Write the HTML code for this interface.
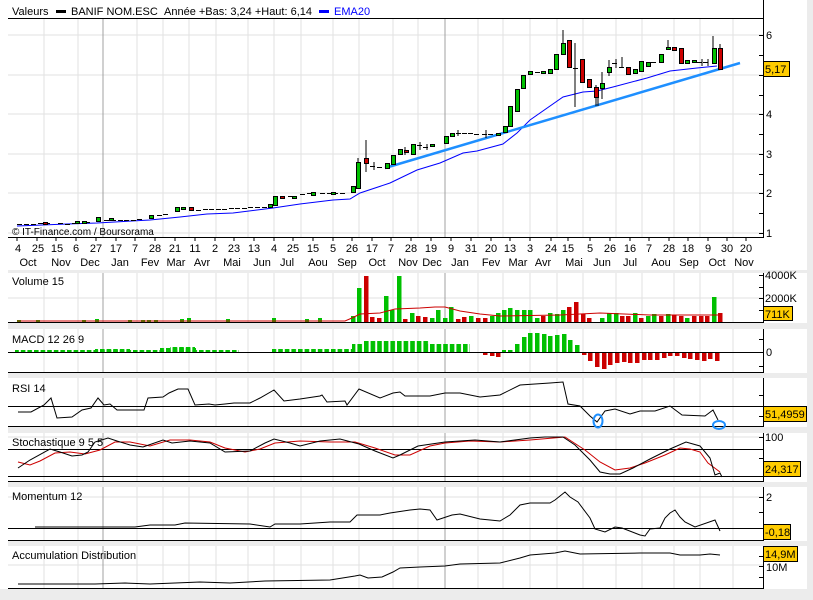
<!DOCTYPE html>
<html><head><meta charset="utf-8"><style>
html,body{margin:0;padding:0;background:#fff;}
svg{display:block;font-family:"Liberation Sans",sans-serif;}
</style></head><body>
<svg width="813" height="600" viewBox="0 0 813 600" xmlns="http://www.w3.org/2000/svg">
<defs>
<pattern id="gb" patternUnits="userSpaceOnUse" x="1" y="0" width="6.6" height="10"><rect x="0" y="0" width="4.6" height="10" fill="#00c000"/></pattern>
</defs>
<rect x="0" y="0" width="813" height="600" fill="#fff"/>
<rect x="807" y="0" width="6" height="600" fill="#ececec"/>
<g fill="#ececec">
<rect x="8" y="270" width="799" height="3"/>
<rect x="8" y="323" width="799" height="6"/>
<rect x="8" y="373" width="799" height="5"/>
<rect x="8" y="427" width="799" height="6"/>
<rect x="8" y="482" width="799" height="5"/>
<rect x="8" y="541" width="799" height="5"/>
<rect x="0" y="589" width="813" height="11"/>
</g>
<g stroke="#e2e2e2" stroke-width="1">
<path d="M44 18V237M78 18V237M137 18V237M163 18V237M189 18V237M216 18V237M248 18V237M274 18V237M301 18V237M333 18V237M359 18V237M393 18V237M418 18V237M478 18V237M503 18V237M530 18V237M557 18V237M583 18V237M616 18V237M642 18V237M674 18V237M700 18V237M733 18V237"/>
<path d="M44 273V322M78 273V322M137 273V322M163 273V322M189 273V322M216 273V322M248 273V322M274 273V322M301 273V322M333 273V322M359 273V322M393 273V322M418 273V322M478 273V322M503 273V322M530 273V322M557 273V322M583 273V322M616 273V322M642 273V322M674 273V322M700 273V322M733 273V322"/>
<path d="M44 329V372M78 329V372M137 329V372M163 329V372M189 329V372M216 329V372M248 329V372M274 329V372M301 329V372M333 329V372M359 329V372M393 329V372M418 329V372M478 329V372M503 329V372M530 329V372M557 329V372M583 329V372M616 329V372M642 329V372M674 329V372M700 329V372M733 329V372"/>
<path d="M44 378V426M78 378V426M137 378V426M163 378V426M189 378V426M216 378V426M248 378V426M274 378V426M301 378V426M333 378V426M359 378V426M393 378V426M418 378V426M478 378V426M503 378V426M530 378V426M557 378V426M583 378V426M616 378V426M642 378V426M674 378V426M700 378V426M733 378V426"/>
<path d="M44 433V481M78 433V481M137 433V481M163 433V481M189 433V481M216 433V481M248 433V481M274 433V481M301 433V481M333 433V481M359 433V481M393 433V481M418 433V481M478 433V481M503 433V481M530 433V481M557 433V481M583 433V481M616 433V481M642 433V481M674 433V481M700 433V481M733 433V481"/>
<path d="M44 487V540M78 487V540M137 487V540M163 487V540M189 487V540M216 487V540M248 487V540M274 487V540M301 487V540M333 487V540M359 487V540M393 487V540M418 487V540M478 487V540M503 487V540M530 487V540M557 487V540M583 487V540M616 487V540M642 487V540M674 487V540M700 487V540M733 487V540"/>
<path d="M44 546V588M78 546V588M137 546V588M163 546V588M189 546V588M216 546V588M248 546V588M274 546V588M301 546V588M333 546V588M359 546V588M393 546V588M418 546V588M478 546V588M503 546V588M530 546V588M557 546V588M583 546V588M616 546V588M642 546V588M674 546V588M700 546V588M733 546V588"/>
<path d="M8 35H763M8 75H763M8 114H763M8 154H763M8 193H763M8 233H763"/>
<path d="M8 298H763M8 565H763M8 437H763M8 497H763"/>
</g>
<g stroke="#a0a0a0"><path d="M103 18V237M445 18V237M103 273V322M445 273V322M103 329V372M445 329V372M103 378V426M445 378V426M103 433V481M445 433V481M103 487V540M445 487V540M103 546V588M445 546V588"/></g>

<text x="12" y="15" font-size="11">Valeurs</text>
<rect x="56" y="10" width="10" height="3" fill="#000"/>
<text x="71" y="15" font-size="11">BANIF NOM.ESC</text>
<text x="164" y="15" font-size="11">Année +Bas: 3,24 +Haut: 6,14</text>
<rect x="319" y="10" width="10" height="3" fill="#0000ff"/>
<text x="334" y="15" font-size="11" fill="#0000ff">EMA20</text>
<path d="M8 18.5H763" stroke="#000"/>

<g stroke="#000" fill="none">
<path d="M763.5 0V238M8 237.5H763"/>
<path d="M8 322.5H763M763.5 273V323"/>
<path d="M8 352.5H763M8 372.5H763M763.5 329V373"/>
<path d="M8 406.5H763M8 426.5H763M763.5 378V427"/>
<path d="M8 449.5H763M8 476.5H763M8 481.5H763M763.5 433V482"/>
<path d="M8 528.5H763M8 540.5H763M763.5 487V541"/>
<path d="M8 588.5H763M763.5 546V589"/>
<path d="M759 35.5h4M759 55.5h4M759 75.5h4M759 95.5h4M759 114.5h4M759 134.5h4M759 154.5h4M759 174.5h4M759 193.5h4M759 213.5h4M759 233.5h4"/>
<path d="M759 275.5h4M759 287.5h4M759 298.5h4M759 310.5h4M759 339.5h4M759 352.5h4M759 366.5h4M759 395.5h4M759 416.5h4M759 437.5h4M759 458.5h4M759 497.5h4M759 512.5h4M759 556.5h4M759 566.5h4M759 577.5h4"/>
</g>
<g stroke="#000"><path d="M17 238v3M37 238v3M56 238v3M76 238v3M96 238v3M116 238v3M135 238v3M155 238v3M175 238v3M195 238v3M215 238v3M234 238v3M254 238v3M274 238v3M293 238v3M313 238v3M333 238v3M352 238v3M372 238v3M391 238v3M411 238v3M431 238v3M451 238v3M471 238v3M491 238v3M510 238v3M530 238v3M551 238v3M568 238v3M590 238v3M610 238v3M630 238v3M649 238v3M669 238v3M688 238v3M708 238v3M727 238v3M746 238v3"/></g>

<g font-size="11">
<text x="766" y="39">6</text><text x="766" y="118">4</text><text x="766" y="158">3</text><text x="766" y="197">2</text><text x="766" y="237">1</text>
<text x="765" y="279">4000K</text><text x="765" y="302">2000K</text>
<text x="766" y="356">0</text>
<text x="765" y="441">100</text>
<text x="766" y="501">2</text>
<text x="766" y="571">10M</text>
</g>
<g font-size="11" stroke="#000" stroke-width="1">
<rect x="763.5" y="61.5" width="26" height="15" fill="#ffcc00"/>
<rect x="763.5" y="306.5" width="29" height="14" fill="#ffcc00"/>
<rect x="763.5" y="406.5" width="43" height="15" fill="#ffcc00"/>
<rect x="763.5" y="461.5" width="37" height="15" fill="#ffcc00"/>
<rect x="763.5" y="524.5" width="27" height="15" fill="#ffcc00"/>
<rect x="763.5" y="546.5" width="34" height="15" fill="#ffcc00"/>
</g>
<g font-size="11">
<text x="765" y="73">5,17</text>
<text x="765" y="318">711K</text>
<text x="765" y="418">51,4959</text>
<text x="765" y="473">24,317</text>
<text x="765" y="536">-0,18</text>
<text x="765" y="558">14,9M</text>
</g>

<g font-size="11" text-anchor="middle">
<text x="18" y="252">4</text><text x="38" y="252">25</text><text x="57" y="252">15</text><text x="76" y="252">6</text><text x="96" y="252">27</text><text x="116" y="252">17</text><text x="135" y="252">7</text><text x="155" y="252">28</text><text x="175" y="252">21</text><text x="195" y="252">11</text><text x="215" y="252">2</text><text x="234" y="252">23</text><text x="254" y="252">13</text><text x="274" y="252">4</text><text x="293" y="252">25</text><text x="313" y="252">15</text><text x="333" y="252">5</text><text x="352" y="252">26</text><text x="372" y="252">17</text><text x="391" y="252">7</text><text x="411" y="252">28</text><text x="431" y="252">19</text><text x="451" y="252">9</text><text x="471" y="252">31</text><text x="491" y="252">20</text><text x="510" y="252">13</text><text x="530" y="252">3</text><text x="551" y="252">24</text><text x="568" y="252">15</text><text x="590" y="252">5</text><text x="610" y="252">26</text><text x="630" y="252">16</text><text x="649" y="252">7</text><text x="669" y="252">28</text><text x="688" y="252">18</text><text x="708" y="252">9</text><text x="727" y="252">30</text><text x="746" y="252">20</text>
<text x="28" y="266">Oct</text><text x="61" y="266">Nov</text><text x="90" y="266">Dec</text><text x="120" y="266">Jan</text><text x="150" y="266">Fev</text><text x="176" y="266">Mar</text><text x="202" y="266">Avr</text><text x="232" y="266">Mai</text><text x="262" y="266">Jun</text><text x="287" y="266">Jul</text><text x="318" y="266">Aou</text><text x="347" y="266">Sep</text><text x="377" y="266">Oct</text><text x="408" y="266">Nov</text><text x="432" y="266">Dec</text><text x="460" y="266">Jan</text><text x="491" y="266">Fev</text><text x="518" y="266">Mar</text><text x="543" y="266">Avr</text><text x="574" y="266">Mai</text><text x="602" y="266">Jun</text><text x="630" y="266">Jul</text><text x="661" y="266">Aou</text><text x="689" y="266">Sep</text><text x="717" y="266">Oct</text><text x="744" y="266">Nov</text>
</g>

<polyline fill="none" stroke="#0000ff" stroke-width="1" points="17,226 67,224 97,223 150,220 180,217 207,214 233,213 273,208 300,204 333,200 350,199 360,193 390,183 417,170 440,163 463,153 477,151 503,144 517,133 530,120 563,97 583,92 597,91 613,87 647,78 670,71 697,68 717,66"/>
<path d="M385 168L740 63" stroke="#1e8fff" stroke-width="2.5"/>

<g stroke="#000" stroke-width="1">
<path d="M17 224.5h5M24 224.5h5M31 224.5h5M38 223.5h5M45 223.5h5M58 223.5h5M65 224.5h5M72 223.5h5M85 222.5h5M104 220.5h5M111 220.5h5M118 220.5h5M124 220.5h5M131 220.5h5M137 219.5h5M157 215.5h5M163 214.5h5M196 210.5h5M203 209.5h5M209 209.5h5M216 209.5h5M222 209.5h5M229 208.5h5M235 208.5h5M242 208.5h5M248 207.5h5M255 207.5h5M262 207.5h5M288 196.5h5M300 194.5h5M307 193.5h5M320 193.5h5M327 193.5h5M333 193.5h5M340 193.5h5M370 166.5h5M377 167.5h5M417 145.5h5M423 147.5h5M456 133.5h5M462 133.5h5M468 133.5h5M474 134.5h5M482 134.5h5M488 134.5h5M535 72.5h5M573 68.5h5M612 63.5h5M619 67.5h5M651 62.5h5M697 62.5h5M703 62.5h5"/>
<path d="M366 140V172M575 43V107M596 85V106M602 72V99M609 60V76M622 57V67M668 40V49M713 36V48M720 44V50M405 147V155M374 162V170M420 142V150M427 144V150M458 130V136M486 130V138M616 59V68M702 59V66M708 59V66"/>
</g>
<g fill="#00c000" stroke="#000" stroke-width="1">
<rect x="75.5" y="221.5" width="4" height="2"/><rect x="82.5" y="221.5" width="4" height="2"/><rect x="96.5" y="217.5" width="4" height="4"/><rect x="109.5" y="218.5" width="4" height="2"/><rect x="149.5" y="215.5" width="4" height="3"/><rect x="175.5" y="207.5" width="4" height="4"/><rect x="181.5" y="207.5" width="4" height="2"/><rect x="268.5" y="204.5" width="4" height="3"/><rect x="273.5" y="196.5" width="4" height="9"/><rect x="292.5" y="196.5" width="4" height="2"/><rect x="311.5" y="192.5" width="4" height="3"/><rect x="331.5" y="192.5" width="4" height="2"/>
<rect x="351.5" y="186.5" width="4" height="6"/><rect x="356.5" y="162.5" width="4" height="26"/><rect x="385.5" y="163.5" width="4" height="5"/><rect x="391.5" y="155.5" width="4" height="9"/><rect x="398.5" y="149.5" width="4" height="5"/><rect x="411.5" y="144.5" width="4" height="10"/><rect x="430.5" y="144.5" width="4" height="2"/><rect x="444.5" y="136.5" width="4" height="7"/><rect x="450.5" y="133.5" width="4" height="3"/><rect x="496.5" y="133.5" width="4" height="2"/><rect x="503.5" y="126.5" width="4" height="6"/>
<rect x="508.5" y="106.5" width="4" height="20"/><rect x="515.5" y="89.5" width="4" height="22"/><rect x="521.5" y="75.5" width="4" height="13"/><rect x="528.5" y="71.5" width="4" height="3"/><rect x="541.5" y="71.5" width="4" height="2"/><rect x="548.5" y="69.5" width="4" height="4"/><rect x="554.5" y="54.5" width="4" height="15"/><rect x="561.5" y="43.5" width="4" height="11"/><rect x="600.5" y="83.5" width="4" height="5"/><rect x="607.5" y="67.5" width="4" height="5"/><rect x="633.5" y="69.5" width="4" height="4"/><rect x="639.5" y="61.5" width="4" height="10"/><rect x="646.5" y="62.5" width="4" height="4"/><rect x="659.5" y="54.5" width="4" height="8"/><rect x="666.5" y="47.5" width="4" height="2"/><rect x="685.5" y="60.5" width="4" height="3"/><rect x="692.5" y="60.5" width="4" height="2"/><rect x="712.5" y="48.5" width="4" height="15"/>
</g>
<g stroke="#000"><path d="M563 30V44M358 158V163M598 95V106"/></g>
<g fill="#cc0000" stroke="#000" stroke-width="1">
<rect x="43.5" y="222.5" width="4" height="2"/><rect x="189.5" y="207.5" width="4" height="3"/><rect x="280.5" y="196.5" width="4" height="2"/><rect x="364.5" y="158.5" width="4" height="5"/><rect x="404.5" y="150.5" width="4" height="2"/><rect x="567.5" y="40.5" width="4" height="27"/><rect x="580.5" y="59.5" width="4" height="23"/><rect x="587.5" y="79.5" width="4" height="8"/><rect x="594.5" y="87.5" width="4" height="10"/><rect x="626.5" y="67.5" width="4" height="7"/><rect x="672.5" y="47.5" width="4" height="3"/><rect x="679.5" y="48.5" width="4" height="15"/><rect x="718.5" y="48.5" width="4" height="21"/>
</g>
<text x="12" y="235" font-size="10">© IT-Finance.com / Boursorama</text>

<text x="12" y="285" font-size="11">Volume 15</text>
<g fill="#00c000">
<rect x="17" y="320" width="4" height="2"/><rect x="36" y="320" width="4" height="2"/><rect x="82" y="320" width="4" height="2"/><rect x="95" y="319" width="4" height="3"/><rect x="128" y="320" width="4" height="2"/><rect x="141" y="320" width="4" height="2"/><rect x="147" y="320" width="4" height="2"/><rect x="154" y="320" width="4" height="2"/><rect x="180" y="319" width="4" height="3"/><rect x="187" y="318" width="4" height="4"/><rect x="226" y="319" width="4" height="3"/><rect x="272" y="318" width="4" height="4"/><rect x="305" y="319" width="4" height="3"/><rect x="318" y="318" width="4" height="4"/>
<rect x="351" y="316" width="4.5" height="6"/><rect x="357" y="288" width="4.5" height="34"/><rect x="384" y="296" width="4.5" height="26"/><rect x="390" y="310" width="4.5" height="12"/><rect x="397" y="276" width="4.5" height="46"/><rect x="410" y="313" width="4.5" height="9"/><rect x="430" y="318" width="4.5" height="4"/><rect x="436" y="310" width="4.5" height="12"/><rect x="443" y="318" width="4.5" height="4"/><rect x="449" y="307" width="4.5" height="15"/><rect x="469" y="316" width="4.5" height="6"/><rect x="490" y="316" width="4.5" height="6"/><rect x="496" y="313" width="4.5" height="9"/>
<rect x="502" y="310" width="4.5" height="12"/><rect x="508" y="308" width="4.5" height="14"/><rect x="515" y="310" width="4.5" height="12"/><rect x="522" y="310" width="4.5" height="12"/><rect x="528" y="310" width="4.5" height="12"/><rect x="535" y="318" width="4.5" height="4"/><rect x="548" y="313" width="4.5" height="9"/><rect x="555" y="314" width="4.5" height="8"/><rect x="561" y="310" width="4.5" height="12"/><rect x="600" y="318" width="4.5" height="4"/><rect x="607" y="313" width="4.5" height="9"/><rect x="614" y="313" width="4.5" height="9"/><rect x="633" y="313" width="4.5" height="9"/><rect x="646" y="316" width="4.5" height="6"/><rect x="652" y="314" width="4.5" height="8"/><rect x="666" y="314" width="4.5" height="8"/><rect x="685" y="318" width="4.5" height="4"/><rect x="712" y="297" width="4.5" height="25"/>
</g>
<g fill="#cc0000">
<rect x="364" y="276" width="4.5" height="46"/><rect x="370" y="317" width="4.5" height="5"/><rect x="377" y="318" width="4.5" height="4"/><rect x="403" y="319" width="4.5" height="3"/><rect x="416" y="316" width="4.5" height="6"/><rect x="423" y="317" width="4.5" height="5"/><rect x="456" y="319" width="4.5" height="3"/><rect x="462" y="317" width="4.5" height="5"/><rect x="476" y="318" width="4.5" height="4"/><rect x="483" y="318" width="4.5" height="4"/><rect x="541" y="316" width="4.5" height="6"/>
<rect x="567" y="307" width="4.5" height="15"/><rect x="574" y="302" width="4.5" height="20"/><rect x="581" y="314" width="4.5" height="8"/><rect x="587" y="318" width="4.5" height="4"/><rect x="620" y="316" width="4.5" height="6"/><rect x="626" y="316" width="4.5" height="6"/><rect x="639" y="318" width="4.5" height="4"/><rect x="659" y="316" width="4.5" height="6"/><rect x="672" y="315" width="4.5" height="7"/><rect x="679" y="316" width="4.5" height="6"/><rect x="692" y="316" width="4.5" height="6"/><rect x="699" y="316" width="4.5" height="6"/><rect x="705" y="316" width="4.5" height="6"/><rect x="718" y="313" width="4.5" height="9"/>
</g>
<polyline fill="none" stroke="#cc0000" points="17,321 200,321 345,321 352,318 360,314 380,313 395,309 420,308 435,307 445,307 460,311 480,314 500,316 560,315 600,313 650,315 720,315"/>

<text x="12" y="343" font-size="11">MACD 12 26 9</text>
<g fill="url(#gb)">
<rect x="15" y="350" width="224" height="2"/><rect x="95" y="349" width="35" height="3"/><rect x="160" y="348" width="36" height="4"/><rect x="170" y="347" width="25" height="5"/>
<rect x="272" y="349" width="80" height="3"/><rect x="352" y="344" width="12" height="8"/><rect x="364" y="341" width="66" height="11"/><rect x="424" y="344" width="46" height="8"/>
</g>
<g fill="#00c000">
<rect x="502" y="350" width="4" height="2"/><rect x="508" y="350" width="4.5" height="2"/><rect x="515" y="344" width="4.5" height="8"/><rect x="522" y="337" width="4.5" height="15"/><rect x="528" y="333" width="4.5" height="19"/><rect x="535" y="333" width="4.5" height="19"/><rect x="542" y="334" width="4.5" height="18"/><rect x="548" y="336" width="4.5" height="16"/><rect x="555" y="335" width="4.5" height="17"/><rect x="562" y="334" width="4.5" height="18"/><rect x="568" y="340" width="4.5" height="12"/><rect x="575" y="345" width="4.5" height="7"/>
</g>
<g fill="#cc0000">
<rect x="483" y="353" width="4.5" height="2"/><rect x="490" y="353" width="4.5" height="3"/><rect x="496" y="353" width="4.5" height="4"/>
<rect x="582" y="353" width="4.5" height="2"/><rect x="588" y="353" width="4.5" height="8"/><rect x="595" y="353" width="4.5" height="14"/><rect x="602" y="353" width="4.5" height="16"/><rect x="608" y="353" width="4.5" height="12"/><rect x="615" y="353" width="4.5" height="10"/><rect x="622" y="353" width="4.5" height="9"/><rect x="628" y="353" width="4.5" height="10"/><rect x="635" y="353" width="4.5" height="10"/><rect x="642" y="353" width="4.5" height="7"/><rect x="648" y="353" width="4.5" height="7"/><rect x="655" y="353" width="4.5" height="7"/><rect x="662" y="353" width="4.5" height="5"/><rect x="668" y="353" width="4.5" height="3"/><rect x="675" y="353" width="4.5" height="3"/><rect x="682" y="353" width="4.5" height="5"/><rect x="688" y="353" width="4.5" height="6"/><rect x="695" y="353" width="4.5" height="7"/><rect x="702" y="353" width="4.5" height="8"/><rect x="708" y="353" width="4.5" height="6"/><rect x="715" y="353" width="4.5" height="8"/>
</g>

<text x="12" y="392" font-size="11">RSI 14</text>
<polyline fill="none" stroke="#000" points="18,412 31,412 44,405 51,398 57,418 72,417 82,410 91,408 98,398 104,405 110,404 117,410 132,410 144,410 148,398 163,397 169,393 178,389 188,389 195,405 209,404 215,405 225,404 234,403 250,403 260,398 274,390 284,401 300,399 320,396 322,395 327,402 345,401 347,405 359,389 380,398 393,393 400,392 405,396 420,396 430,396 445,393 460,393 480,397 500,395 520,385 550,383 563,382 568,404 580,406 590,416 597,422 605,411 615,409 630,414 640,411 655,411 670,406 682,415 705,416 713,410 718,420"/>
<ellipse cx="598" cy="421" rx="4.5" ry="6.5" fill="none" stroke="#1e8fff" stroke-width="2"/>
<ellipse cx="719" cy="425" rx="6" ry="4" fill="none" stroke="#1e8fff" stroke-width="2"/>

<text x="12" y="446" font-size="11">Stochastique 9 5 5</text>
<polyline fill="none" stroke="#cc0000" points="18,462 30,465 40,461 55,453 70,452 85,454 100,450 115,442 130,442 150,446 170,440 190,440 210,442 225,448 245,452 260,449 275,443 300,441 330,442 355,442 375,448 395,455 410,455 430,446 445,443 470,441 500,442 530,440 565,437 585,450 600,462 615,470 630,468 645,463 665,455 680,448 690,449 700,452 708,463 720,472"/>
<polyline fill="none" stroke="#000" points="18,468 30,460 50,449 60,452 72,456 82,455 88,452 95,442 108,438 117,441 130,445 143,447 163,440 172,443 190,441 210,443 225,452 250,451 265,443 274,439 290,443 300,446 320,441 340,439 359,444 375,451 393,458 400,455 418,446 445,442 460,441 475,440 500,442 530,438 545,437 563,437 575,445 590,460 600,472 610,474 620,474 633,468 650,459 670,449 686,442 700,446 710,458 715,475 720,473 722,477"/>

<text x="12" y="500" font-size="11">Momentum 12</text>
<polyline fill="none" stroke="#000" points="35,527 135,527 150,525 175,525 185,523 250,524 270,527 275,524 300,524 330,522 350,522 357,515 380,515 390,513 410,510 420,509 430,510 437,520 452,515 460,514 480,519 500,521 510,515 520,505 530,503 550,503 555,500 565,492 570,497 578,502 590,518 595,529 605,532 615,527 622,528 640,535 645,536 650,529 660,528 665,518 670,513 675,510 680,517 685,522 695,527 715,520 720,531"/>

<text x="12" y="559" font-size="11">Accumulation Distribution</text>
<polyline fill="none" stroke="#000" points="18,584 95,584 125,583 150,584 200,582 230,583 265,581 330,580 355,576 360,575 368,578 382,577 393,572 400,568 420,567 445,566 460,564 500,563 520,558 530,555 555,553 565,551 575,553 580,554 640,553 670,553 680,555 700,555 710,554 720,555"/>
</svg>
</body></html>
